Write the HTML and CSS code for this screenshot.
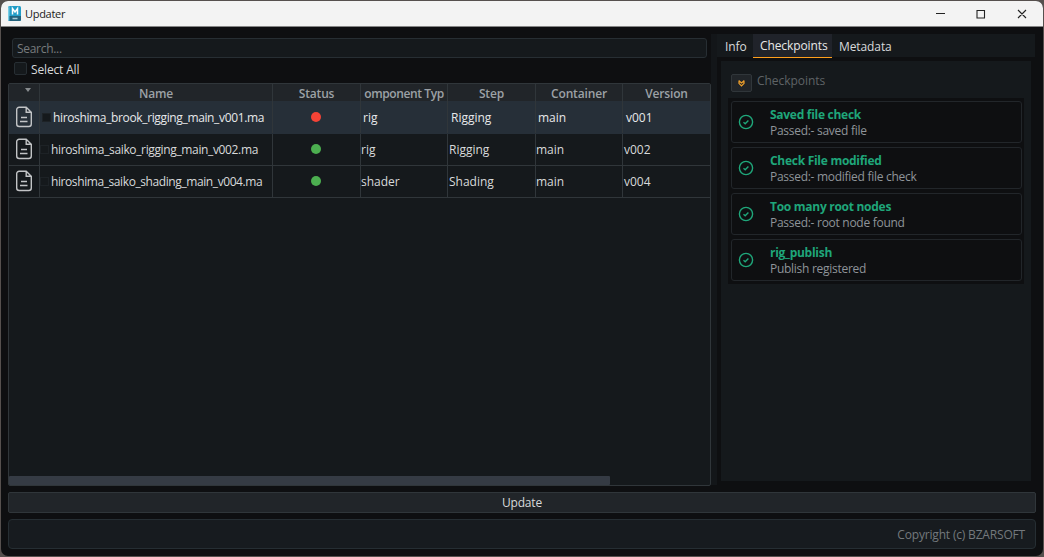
FILE: index.html
```html
<!DOCTYPE html>
<html lang="en">
<head>
<meta charset="UTF-8">
<title>Updater</title>
<link rel="stylesheet" href="styles.css">
</head>
<body>
<svg class="defs" width="0" height="0">
  <symbol id="file" viewBox="0 0 18 22">
    <path d="M4.200 1.300h7l5.100 5v11.700a2.500 2.500 0 0 1-2.500 2.500H4.200A2.500 2.500 0 0 1 1.700 18V3.800a2.500 2.500 0 0 1 2.500-2.500zM11.200 1.300V6.300h5.100M6 11.500h6M5 15.500h7.500"/>
  </symbol>
  <symbol id="check" viewBox="0 0 16 16">
    <circle cx="8" cy="8" r="6.600"/>
    <path d="M5.500 8.200l1.700 1.500 3.200-3.200"/>
  </symbol>
</svg>

<div class="window">
  <div class="titlebar">
    <svg class="app-icon" width="13" height="15" viewBox="0 0 13 15">
      <rect width="13" height="15" rx="1.500" fill="#239dc7"/>
      <path d="M0 1.500L1.500 0V15L0 13.500z" fill="#79cde6"/>
      <path d="M1.500 10H13v3.500A1.500 1.500 0 0 1 11.500 15h-10z" fill="#22617b"/>
      <path d="M4.500 8.500V2.500L7 6l2.500-3.500v6" fill="none" stroke="#fff" stroke-width="1.500"/>
      <path d="M4.500 12.500h5" stroke="#a9c9d5" stroke-width="1.500"/>
    </svg>
    <span class="caption">Updater</span>
    <svg class="win-buttons" width="96" height="12" viewBox="0 0 96 12">
      <path d="M2 5.500h9M43 2.500h7.500v7.500H43zM84 2l8 8M92 2l-8 8"/>
    </svg>
  </div>

  <div class="main">
    <div class="left">
      <div class="search"><span>Search...</span></div>
      <div class="select-all"><i class="box"></i><span>Select All</span></div>
      <div class="table">
        <div class="row head">
          <div class="sort"><i></i></div>
          <div>Name</div>
          <div>Status</div>
          <div class="component">omponent Typ</div>
          <div>Step</div>
          <div>Container</div>
          <div>Version</div>
        </div>
        <div class="row selected">
          <div class="icon"><svg width="18" height="22"><use href="#file"/></svg></div>
          <div class="name"><i></i><span>hiroshima_brook_rigging_main_v001.ma</span></div>
          <div class="status"><i class="dot red"></i></div>
          <div>rig</div>
          <div>Rigging</div>
          <div>main</div>
          <div>v001</div>
        </div>
        <div class="row">
          <div class="icon"><svg width="18" height="22"><use href="#file"/></svg></div>
          <div class="name"><i></i><span>hiroshima_saiko_rigging_main_v002.ma</span></div>
          <div class="status"><i class="dot"></i></div>
          <div>rig</div>
          <div>Rigging</div>
          <div>main</div>
          <div>v002</div>
        </div>
        <div class="row">
          <div class="icon"><svg width="18" height="22"><use href="#file"/></svg></div>
          <div class="name shading"><i></i><span>hiroshima_saiko_shading_main_v004.ma</span></div>
          <div class="status"><i class="dot"></i></div>
          <div>shader</div>
          <div>Shading</div>
          <div>main</div>
          <div>v004</div>
        </div>
        <div class="scrollbar"><i></i></div>
      </div>
    </div>

    <div class="splitter"></div>

    <div class="right">
      <div class="tabs">
        <div class="tab info">Info</div>
        <div class="tab active">Checkpoints</div>
        <div class="tab">Metadata</div>
      </div>
      <div class="panel">
        <div class="group-title">
          <div class="collapse">
            <svg width="7" height="7" viewBox="0 0 7 7"><path d="M.7.500L3.500 3 6.300.500M.7 3.200L3.500 6l2.800-2.800M1 .8v2.700M6 .8v2.700"/></svg>
          </div>
          <span>Checkpoints</span>
        </div>
        <div class="checks">
          <div class="check">
            <svg width="16" height="16"><use href="#check"/></svg>
            <div><b>Saved file check</b><p>Passed:- saved file</p></div>
          </div>
          <div class="check">
            <svg width="16" height="16"><use href="#check"/></svg>
            <div><b>Check File modified</b><p>Passed:- modified file check</p></div>
          </div>
          <div class="check">
            <svg width="16" height="16"><use href="#check"/></svg>
            <div><b>Too many root nodes</b><p>Passed:- root node found</p></div>
          </div>
          <div class="check">
            <svg width="16" height="16"><use href="#check"/></svg>
            <div><b>rig_publish</b><p>Publish registered</p></div>
          </div>
        </div>
      </div>
    </div>
  </div>

  <div class="update">Update</div>
  <div class="footer">Copyright (c) BZARSOFT</div>
</div>
</body>
</html>
```

FILE: styles.css
```css
* {
  box-sizing: border-box;
}
body {
  margin: 0;
  padding: 1px;
  height: 557px;
  overflow: hidden;
  background: #56504e;
  font: 12px/16px "Open Sans", "Noto Sans", sans-serif;
  color: #d8dadb;
  white-space: nowrap;
}
.defs {
  display: block;
}
.window {
  display: flex;
  flex-direction: column;
  width: 1042px;
  height: 555px;
  border-radius: 7px;
  overflow: hidden;
  background: #0e0f11;
}
.titlebar {
  flex: none;
  display: flex;
  align-items: center;
  height: 26px;
  padding: 0 13px 0 7px;
  background: #f3f3f3;
  border-bottom: 1px solid #858585;
  color: #1b1b1b;
}
.caption {
  margin-left: 4px;
  font-size: 11px;
  letter-spacing: -0.3px;
}
.win-buttons {
  margin-left: auto;
  fill: none;
  stroke: #222;
  stroke-width: 1.1;
}
.main {
  display: flex;
  height: 459px;
  padding: 7px 7px 0;
}
.left {
  width: 703px;
  padding-top: 4px;
}
.search {
  height: 20px;
  margin: 0 4px 0 4px;
  padding: 2px 4px;
  background: #15191c;
  border: 1px solid #272e33;
  border-radius: 3px;
  color: #777b7d;
  letter-spacing: -0.3px;
}
.select-all {
  display: flex;
  gap: 4px;
  height: 25px;
  padding: 4px 0 0 6px;
  letter-spacing: -0.15px;
}
.box {
  width: 13px;
  height: 13px;
  background: #15191c;
  border: 1px solid #272e33;
  border-radius: 2px;
}
.table {
  display: flex;
  flex-direction: column;
  height: 403px;
  background: #15191c;
  border: 1px solid #30363a;
  border-radius: 2px;
}
.row {
  display: grid;
  grid-template-columns: 31px 233px 88px 87px 88px 87px 87px;
  height: 32px;
  border-bottom: 1px solid #30363a;
}
.row > div {
  display: flex;
  align-items: center;
  border-right: 1px solid #30363a;
  overflow: hidden;
}
.row > div:nth-child(5),
.row > div:last-child {
  padding-left: 1px;
}
.row > div:last-child {
  border-right: 0;
}
.row.head {
  height: 17px;
  background: #212529;
  border: 0;
  color: #9ca1a6;
  font-weight: 600;
  letter-spacing: -0.15px;
}
.row.head > div {
  justify-content: center;
  padding: 2px 0 0;
}
.row.head > .component {
  letter-spacing: -0.4px;
}
.row.head > .sort {
  align-items: flex-start;
  padding: 4px 0 0 8px;
}
.sort i {
  border: 3px solid transparent;
  border-top: 4px solid #888c8f;
  border-bottom: 0;
}
.row.selected {
  height: 33px;
  background: #262f38;
  border-color: #262f38;
  color: #e6e8ea;
}
.row.selected > div {
  padding: 1px 0 0 2px;
}
.row.selected > div:nth-child(5),
.row.selected > div:last-child {
  padding-left: 3px;
}
.row > .icon,
.row > .status,
.row.selected > .icon,
.row.selected > .status {
  justify-content: center;
  padding: 0 1px 0 0;
}
.row > .icon {
  padding-bottom: 1px;
}
.icon svg {
  fill: none;
  stroke: #c2c4c6;
  stroke-width: 1.4;
}
.name {
  letter-spacing: -0.36px;
}
.name.shading {
  letter-spacing: -0.41px;
}
.name i {
  flex: none;
  width: 9px;
  height: 9px;
  margin-right: 2px;
  border: 1px solid #1d2226;
}
.selected .name i {
  background: #15191c;
}
.dot {
  width: 10px;
  height: 10px;
  margin-bottom: 1px;
  border-radius: 50%;
  background: #4caf50;
}
.dot.red {
  background: #f44336;
}
.scrollbar {
  height: 9px;
  margin-top: auto;
}
.scrollbar i {
  display: block;
  width: 601px;
  height: 9px;
  background: #353b44;
  border-radius: 1px;
}
.splitter {
  width: 6px;
  margin-bottom: 1px;
  background: #131619;
}
.right {
  width: 318px;
}
.tabs {
  display: flex;
  height: 24px;
  background: linear-gradient(#15191c 23px, transparent 23px);
  letter-spacing: -0.1px;
}
.tab {
  padding: 5px 7px 0;
}
.tab.info {
  padding-left: 8px;
  width: 36px;
}
.tab.active {
  width: 79px;
  padding-top: 4px;
  background: #20232a;
  border-bottom: 1px solid #ff9f1c;
  color: #e8e8e8;
}
.panel {
  width: 310px;
  height: 420px;
  margin: 3px 0 0 4px;
  padding: 13px 7px 0;
  background: #15191c;
}
.group-title {
  display: flex;
  height: 24px;
  padding-left: 3px;
  gap: 5px;
  color: #5f6366;
  letter-spacing: -0.05px;
}
.group-title span {
  margin-top: -1px;
}
.collapse {
  display: flex;
  align-items: center;
  justify-content: center;
  width: 21px;
  height: 18px;
  background: #212529;
  border: 1px solid #30363a;
  border-radius: 2px;
}
.collapse path {
  fill: none;
  stroke: #f0a02b;
  stroke-width: 1.2;
}
.checks {
  display: grid;
  gap: 4px;
  padding: 3px 2px 3px 3px;
  background: #0e0f11;
}
.check {
  display: flex;
  height: 42px;
  padding: 5px 0 0 6px;
  gap: 16px;
  border: 1px solid #22262a;
  border-radius: 3px;
  color: #8f9499;
  line-height: 16px;
  letter-spacing: -0.28px;
}
.check svg {
  margin-top: 7px;
  fill: none;
  stroke: #1fa67a;
  stroke-width: 1.4;
}
.check b {
  display: block;
  height: 16px;
  color: #1fa67a;
}
.check p {
  margin: 0;
}
.update {
  height: 21px;
  margin: 6px 7px 0;
  padding-top: 2px;
  background: #212529;
  border: 1px solid #30363a;
  border-radius: 2px;
  text-align: center;
  letter-spacing: -0.2px;
}
.footer {
  height: 30px;
  margin: 6px 7px 0;
  padding: 7px 10px;
  background: #171b1f;
  border: 1px solid #262e33;
  border-radius: 4px;
  color: #74797d;
  text-align: right;
  letter-spacing: -0.18px;
}
```
